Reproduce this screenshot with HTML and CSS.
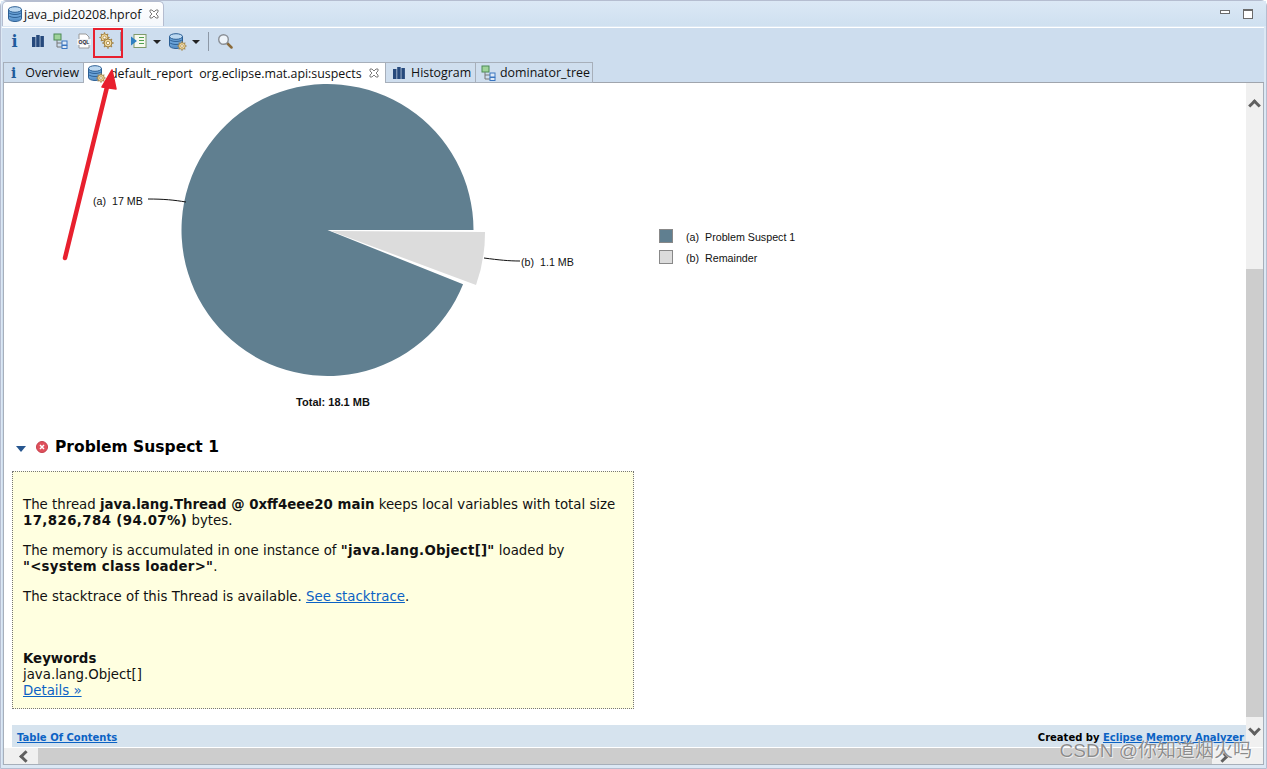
FILE: index.html
```html
<!DOCTYPE html>
<html lang="en">
<head>
    <meta charset="UTF-8">
    <title>java_pid20208.hprof</title>
    <link rel="stylesheet" href="styles.css">
</head>
<body>
<svg class="defs" width="0" height="0">
    <defs>
        <symbol id="db" viewBox="0 0 14 16">
            <ellipse cx="7" cy="12.500" rx="6.500" ry="3" fill="#5c94cb" stroke="#2c5f94"/>
            <rect x=".5" y="3" width="13" height="9.500" fill="#6ba3d8"/>
            <path d="M.5 3v9.500M13.500 3v9.500" stroke="#2c5f94"/>
            <path d="M.5 6.500c2 2.600 11 2.600 13 0M.5 9.500c2 2.600 11 2.600 13 0" fill="none" stroke="#2c5f94"/>
            <ellipse cx="7" cy="3.500" rx="6.500" ry="2.800" fill="#bcd8f0" stroke="#2c5f94"/>
        </symbol>
        <symbol id="gear" viewBox="0 0 10 10">
            <circle cx="5" cy="5" r="3.300" fill="#f3dca0" stroke="#9a7a3a" stroke-width=".8"/>
            <path d="M5 .3v1.500M5 8.200v1.500M.3 5h1.500M8.200 5h1.500M1.700 1.700l1 1M7.300 7.300l1 1M1.700 8.300l1-1M7.300 2.700l1-1" stroke="#a5854a" stroke-width="1.100"/>
            <circle cx="5" cy="5" r="1.400" fill="#fffaf0" stroke="#9a7a3a" stroke-width=".6"/>
        </symbol>
        <symbol id="bars" viewBox="0 0 12 12">
            <path d="M0 2h3.500v10H0zM4.200 0h3.500v12H4.200zM8.400 1h3.500v11H8.400z" fill="#26497c"/>
        </symbol>
        <symbol id="tree" viewBox="0 0 16 16">
            <rect x="1" y="1" width="7" height="6" fill="#9fd39a" stroke="#4c8a55"/>
            <path d="M4 7v7h5M4 10h5" fill="none" stroke="#777"/>
            <rect x="9" y="8" width="5" height="4" fill="#dfeaf7" stroke="#3b76c0"/>
            <rect x="9" y="12.500" width="5" height="3" fill="#dfeaf7" stroke="#3b76c0"/>
        </symbol>
        <symbol id="close" viewBox="0 0 10 10">
            <path d="M1 1h2l2 2 2-2h2v2L7 5l2 2v2H7L5 7 3 9H1V7l2-2-2-2z" fill="#fff" stroke="#7d7d7d"/>
        </symbol>
    </defs>
</svg>

<div class="window">
    <div class="editor-head">
        <div class="editor-tab">
            <svg class="ic-db"><use href="#db"/></svg>
            <span>java_pid20208.hprof</span>
            <svg class="ic-close"><use href="#close"/></svg>
        </div>
        <div class="win-btns">
            <span class="btn-min"></span>
            <span class="btn-max"></span>
        </div>
    </div>

    <div class="panel">
        <div class="toolbar">
            <span class="tool info">i</span>
            <span class="tool"><svg class="ic-bars"><use href="#bars"/></svg></span>
            <span class="tool"><svg class="ic16"><use href="#tree"/></svg></span>
            <span class="tool">
                <svg class="ic16" viewBox="0 0 16 16">
                    <path d="M3 1h7l3 3v11H3z" fill="#fff" stroke="#999"/>
                    <rect x="1" y="6" width="14" height="6" fill="#eef1f4"/>
                    <text x="8" y="11" class="oql">OQL</text>
                </svg>
            </span>
            <span class="tool gears">
                <svg class="gear-a"><use href="#gear"/></svg>
                <svg class="gear-b"><use href="#gear"/></svg>
            </span>
            <span class="sep sep-a"></span>
            <span class="tool">
                <svg class="ic16" viewBox="0 0 16 16">
                    <rect x="3" y="1.500" width="12" height="13" fill="#f6f8ee" stroke="#7f9a6a"/>
                    <path d="M8 4.500h5M8 7.500h5M8 10.500h5" stroke="#4fa04f"/>
                    <path d="M0 3.500l6 4.500-6 4.500z" fill="#2d7fc1"/>
                </svg>
            </span>
            <span class="caret"></span>
            <span class="tool">
                <span class="db-gear">
                    <svg class="ic-db"><use href="#db"/></svg>
                    <svg class="gear-small"><use href="#gear"/></svg>
                </span>
            </span>
            <span class="caret"></span>
            <span class="sep"></span>
            <span class="tool">
                <svg class="ic16" viewBox="0 0 16 16">
                    <path d="M10 10l4.500 4.500" stroke="#8a6a3a" stroke-width="2.500" stroke-linecap="round"/>
                    <circle cx="6.500" cy="6.500" r="4.800" fill="#eef4fa" stroke="#8a8f96" stroke-width="1.400"/>
                </svg>
            </span>
        </div>

        <div class="tabs">
            <div class="tab tab-overview"><span class="info small">i</span>Overview</div>
            <div class="tab tab-report active">
                <span class="db-gear">
                    <svg class="ic-db"><use href="#db"/></svg>
                    <svg class="gear-small"><use href="#gear"/></svg>
                </span>
                <span class="report">default_report&nbsp; org.eclipse.mat.api:suspects</span>
                <svg class="ic-close"><use href="#close"/></svg>
            </div>
            <div class="tab tab-histo"><svg class="ic-bars"><use href="#bars"/></svg>Histogram</div>
            <div class="tab tab-dom"><svg class="ic16"><use href="#tree"/></svg>dominator_tree</div>
        </div>

        <div class="view">
            <div class="view-row">
                <div class="page">
                    <svg class="chart" width="1240" height="338" viewBox="0 0 1240 338">
                        <path d="M323.500 147L469.500 147A146 146 0 1 0 459.060 201.200Z" fill="#607f90"/>
                        <path d="M327 148L481 149A154.500 154.500 0 0 1 472 202Z" fill="#dcdcdc"/>
                        <path d="M144 116C160 116 170 117 182 119" fill="none" stroke="#111"/>
                        <path d="M480 175C495 177 505 178 516 178" fill="none" stroke="#111"/>
                        <text x="89" y="122" class="lbl">(a)&#160; 17 MB</text>
                        <text x="517" y="183" class="lbl">(b)&#160; 1.1 MB</text>
                        <rect x="655.500" y="146.500" width="13" height="13" fill="#607f90" stroke="#888"/>
                        <rect x="655.500" y="167.500" width="13" height="13" fill="#dcdcdc" stroke="#888"/>
                        <text x="682" y="158" class="lbl">(a)&#160; Problem Suspect 1</text>
                        <text x="682" y="179" class="lbl">(b)&#160; Remainder</text>
                        <text x="329" y="323" class="total">Total: 18.1 MB</text>
                    </svg>

                    <h2 class="suspect">
                        <span class="twist"></span>
                        <span class="err">
                            <svg width="12" height="12" viewBox="0 0 12 12">
                                <circle cx="6" cy="6" r="5.500" fill="#e0505c" stroke="#c4414d"/>
                                <path d="M4 4l4 4M8 4l-4 4" stroke="#fff" stroke-width="1.500"/>
                            </svg>
                        </span>
                        Problem Suspect 1
                    </h2>

                    <div class="note">
                        <p>The thread <b>java.lang.Thread @ 0xff4eee20 main</b> keeps local variables with total size <b class="num">17,826,784 (94.07%)</b> bytes.</p>
                        <p>The memory is accumulated in one instance of <b class="cls">"java.lang.Object[]"</b> loaded by <b class="cls loader">"&lt;system class loader&gt;"</b>.</p>
                        <p>The stacktrace of this Thread is available. <a href="#">See stacktrace</a>.</p>
                        <div class="keywords">
                            <b>Keywords</b><br>
                            java.lang.Object[]<br>
                            <a href="#">Details »</a>
                        </div>
                    </div>

                    <div class="foot">
                        <a href="#">Table Of Contents</a>
                        <span><b>Created by</b> <a href="#">Eclipse Memory Analyzer</a></span>
                    </div>
                </div>
                <div class="vbar">
                    <span class="arrow-btn"><i class="chev up"></i></span>
                    <span class="vtrack"><span class="vthumb"></span></span>
                    <span class="arrow-btn btn-down"><i class="chev down"></i></span>
                </div>
            </div>
            <div class="hbar">
                <span class="arrow-btn"><i class="chev left"></i></span>
                <span class="hthumb"></span>
                <span class="arrow-btn"><i class="chev right"></i></span>
                <span class="corner"></span>
            </div>
        </div>
    </div>

    <!-- markup drawn on top of the screenshot -->
    <span class="red-box"></span>
    <svg class="red-arrow" width="70" height="200" viewBox="0 0 70 200">
        <path d="M5 189L47 18" stroke="#e8202e" stroke-width="4.500" stroke-linecap="round"/>
        <path d="M52 1L56 20 42 18Z" fill="#e8202e" stroke="#e8202e" stroke-width="1.500" stroke-linejoin="round"/>
    </svg>
    <span class="watermark">CSDN @你知道烟火吗</span>
</div>
</body>
</html>
```

FILE: styles.css
```css
*{margin: 0;padding: 0;box-sizing: border-box;}
body{width: 1267px;height: 769px;overflow: hidden;background: #fff;font-family: "Open Sans","Noto Sans",sans-serif;}
a{color: #0b62c4;text-decoration: underline;}
svg{display: block;flex: none;}
.defs{position: absolute;}

.window{position: relative;width: 1267px;height: 769px;display: flex;flex-direction: column;background: #dce8f4;
    border: 1px solid #b5bdd0;border-radius: 6px 6px 0 0;}

/* editor tab strip */
.editor-head{height: 25px;display: flex;justify-content: space-between;background: linear-gradient(#dbe8f5,#cfe0f0);flex: none;}
.editor-tab{width: 162px;margin-left: 1px;display: flex;align-items: center;gap: 2px;padding-left: 5px;background: linear-gradient(#fff,#f4f7fb);
    border: 1px solid #b5bdd0;border-bottom: 0;border-radius: 5px 5px 0 0;font-size: 12.4px;color: #111;}
.ic16{width: 16px;height: 16px;}
.ic-db{width: 14px;height: 16px;}
.ic-close{width: 10px;height: 10px;margin-left: 6px;}
.win-btns{display: flex;align-items: center;gap: 13px;padding-right: 13px;}
.btn-min{width: 10px;height: 4px;border: 1px solid #6b6b6b;background: #fff;margin-top: -4px;}
.btn-max{width: 10px;height: 10px;border: 1px solid #6b6b6b;border-top-width: 2px;background: #fff;}

/* toolbar + inner tabs */
.panel{flex: 1;display: flex;flex-direction: column;min-height: 0;margin: 1px 2px 3px 1px;background: #cdddee;border-top: 1px solid #fff;}
.toolbar{height: 34px;display: flex;align-items: center;padding: 0 0 8px 1px;flex: none;}
.tool{width: 23px;height: 22px;display: flex;align-items: center;justify-content: center;position: relative;flex: none;}
.info{font: bold 16px "DejaVu Serif",serif;color: #1f5c9c;}
.info.small{font-size: 14px;}
.ic-bars{width: 12px;height: 12px;}
.oql{font: bold 5px "Liberation Sans",sans-serif;fill: #223;text-anchor: middle;}
.gears{width: 24px;}
.gear-a{width: 11px;height: 11px;position: absolute;left: 4px;top: 2px;}
.gear-b{width: 12px;height: 12px;position: absolute;left: 7px;top: 7px;}
.sep{width: 1px;height: 19px;background: #8d98a6;margin: 0 4px 0 3px;}
.sep-a{margin: 0 6px 0 1px;}
.caret{width: 0;height: 0;border: 4px solid transparent;border-top: 4px solid #222;border-bottom: 0;margin: 2px 5px 0 3px;}
.db-gear{position: relative;display: block;width: 18px;height: 16px;flex: none;}
.gear-small{width: 10px;height: 10px;position: absolute;left: 8px;top: 8px;}

.tabs{height: 21px;display: flex;margin: 0 0 0 1px;border-bottom: 1px solid #a0a5ad;flex: none;}
.tab{display: flex;align-items: center;font-size: 12.4px;color: #111;background: #cfdeee;border: 1px solid #a7afba;border-left: 0;height: 21px;flex: none;}
.tab-overview{width: 81px;border-left: 1px solid #a7afba;padding-left: 7px;gap: 9px;}
.tab-report{width: 302px;padding-left: 4px;gap: 4px;}
.tab-histo{width: 90px;padding-left: 7px;gap: 6px;}
.tab-dom{width: 117px;padding-left: 5px;gap: 3px;}
.tab.active{background: #fff;border-bottom: 0;}
.tab-report .ic-close{margin-left: 3px;}

/* report view */
.view{flex: 1;min-height: 0;display: flex;flex-direction: column;background: #fff;margin-left: 1px;border-right: 1px solid #a7afba;border-bottom: 1px solid #a7afba;border-left: 1px solid #a7afba;}
.view-row{flex: 1;min-height: 0;display: flex;}
.page{flex: 1;min-width: 0;overflow: hidden;font: 13.33px "DejaVu Sans",sans-serif;color: #111;}
.lbl{font: 10.7px "Liberation Sans",sans-serif;fill: #111;}
.total{font: bold 11px "Liberation Sans",sans-serif;fill: #111;text-anchor: middle;}
.suspect{height: 24px;margin: 14px 0 0 12px;display: flex;align-items: center;font: bold 15.5px "DejaVu Sans",sans-serif;color: #000;}
.twist{width: 0;height: 0;border: 5px solid transparent;border-top: 6px solid #27568f;border-bottom: 0;margin: 3px 10px 0 0;}
.err{margin-right: 7px;}
.note{width: 622px;height: 238px;margin: 12px 0 0 8px;padding: 25px 10px 0 10px;background: #ffffe0;border: 1px dotted #777;line-height: 16px;}
.note p{margin-bottom: 14px;}
.num{letter-spacing: .4px;}
.cls{letter-spacing: .25px;}
.loader{white-space: nowrap;}
.keywords{margin-top: 46px;}
.foot{height: 24px;margin: 16px 0 0 8px;padding: 0 2px 0 5px;display: flex;align-items: center;justify-content: space-between;background: #d6e3ee;font: bold 10px "DejaVu Sans",sans-serif;color: #000;}

/* scrollbars */
.vbar{width: 17px;display: flex;flex-direction: column;background: #f0f0f0;flex: none;}
.vtrack{flex: 1;padding-top: 158px;display: flex;flex-direction: column;}
.vthumb{flex: 1;background: #cdcdcd;}
.arrow-btn{height: 28px;display: flex;align-items: center;justify-content: center;flex: none;}
.btn-down{height: 30px;}
.chev{display: block;width: 9px;height: 9px;border: solid #606060;border-width: 3px 0 0 3px;}
.chev.up{transform: rotate(45deg);margin-top: 16px;}
.chev.down{transform: rotate(225deg);margin-bottom: 6px;}
.chev.left{transform: rotate(-45deg);margin-left: 8px;}
.chev.right{transform: rotate(135deg);margin-right: 14px;}
.hbar{height: 17px;display: flex;background: #f0f0f0;flex: none;border-top: 1px solid #fff;}
.hbar .arrow-btn{height: 16px;width: 34px;}
.hthumb{flex: 1;background: #cdcdcd;}
.corner{width: 17px;background: #f0f0f0;}

/* red annotation + watermark */
.red-box{position: absolute;left: 92px;top: 27px;width: 30px;height: 30px;border: 2px solid #e8202e;}
.red-arrow{position: absolute;left: 59px;top: 68px;}
.watermark{position: absolute;right: 14px;top: 734px;font: 19px "Liberation Sans","Noto Sans CJK SC",sans-serif;color: rgba(120,120,120,.85);text-shadow: 0 0 1px #fff,1px 1px 0 rgba(255,255,255,.6);white-space: nowrap;}
```
